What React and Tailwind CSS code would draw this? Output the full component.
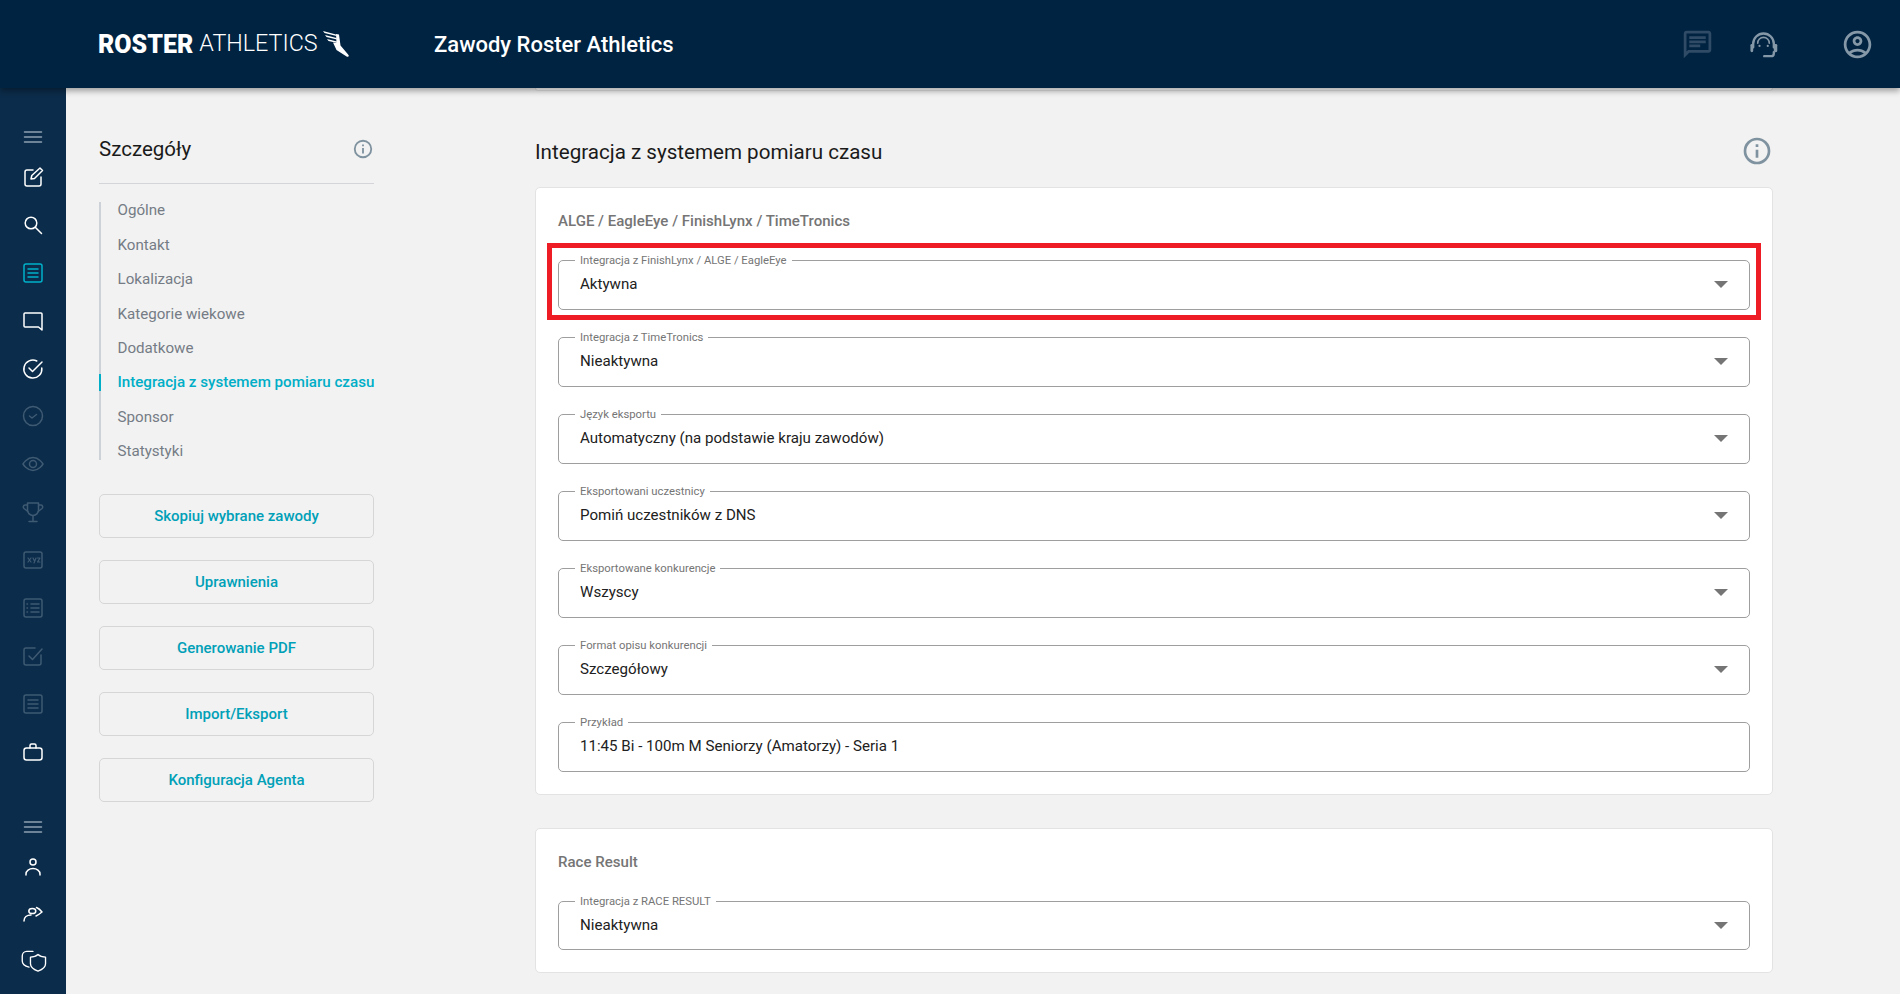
import React from "react";

const font = { fontFamily: "Roboto, sans-serif" };

// Thin line icon wrapper for the left rail
const Line = ({ children, size = 24, sw = 1.5 }) => (
  <svg width={size} height={size} viewBox="0 0 24 24" fill="none" stroke="currentColor" strokeWidth={sw} strokeLinecap="round" strokeLinejoin="round">
    {children}
  </svg>
);

const topRail = [
  { h: "h-[32px]", c: "text-[#8fa1b2]", icon: <path d="M3.500 7h17M3.500 12h17M3.500 17h17" /> },
  { c: "text-white", icon: <><path d="M12 5H6a2 2 0 0 0-2 2v12a2 2 0 0 0 2 2h12a2 2 0 0 0 2-2v-7" /><path d="M10 14l.8-3.500L19 3l2.500 2.500-8 8z" /></> },
  { c: "text-white", icon: <><circle cx="10" cy="10" r="5.800" /><path d="M14.500 14.500l6 6" /></> },
  { c: "text-[#00b0ca]", icon: <><rect x="3" y="3" width="18" height="18" rx="2" /><path d="M7 8h10M7 12h10M7 16h10" /></> },
  { c: "text-white", icon: <path d="M4 4h16a1 1 0 0 1 1 1v16l-3.500-3H4a1 1 0 0 1-1-1V5a1 1 0 0 1 1-1z" /> },
  { c: "text-white", icon: <><path d="M20.800 11a9 9 0 1 1-5-7" /><path d="M8 11l3.500 3.500L21 5" /></> },
  { c: "text-[#3f5a73]", icon: <><circle cx="12" cy="12" r="9.500" /><path d="M8.500 12l2.500 2 4.500-3.500" /></> },
  { c: "text-[#3f5a73]", icon: <><path d="M2 12s3.800-6.500 10-6.500S22 12 22 12s-3.800 6.500-10 6.500S2 12 2 12z" /><circle cx="12" cy="12" r="3.500" /></> },
  { c: "text-[#3f5a73]", icon: <><path d="M6.500 3h11v7a5.500 5.500 0 0 1-11 0z" /><path d="M6.500 5H4a2 2 0 0 0-1 3.500l3.800 3M17.500 5H20a2 2 0 0 1 1 3.500l-3.800 3M12 15.500V21M8 21.500h8" /></> },
  { c: "text-[#3f5a73]", icon: <><rect x="3" y="4" width="18" height="16" rx="2" /><path d="M7 10l3 4M10 10l-3 4M12 10l1.500 3M15 10l-2 5M16.500 10H19l-2.500 4H19" strokeWidth="1.200" /></> },
  { c: "text-[#3f5a73]", icon: <><rect x="3" y="3" width="18" height="18" rx="2" /><path d="M10 8h8M10 12h8M10 16h8M6 8h.5M6 12h.5M6 16h.5" /></> },
  { c: "text-[#3f5a73]", icon: <><path d="M14 4H5a2 2 0 0 0-2 2v13a2 2 0 0 0 2 2h13a2 2 0 0 0 2-2v-8" /><path d="M8 12l3.500 3.500L21 5" /></> },
  { c: "text-[#3f5a73]", icon: <><rect x="3" y="3" width="18" height="18" rx="2" /><path d="M7 8h10M7 12h10M7 16h10" /></> },
  { c: "text-white", icon: <><rect x="3" y="8" width="18" height="12" rx="2.500" /><path d="M9 8V5.500A1.500 1.500 0 0 1 10.500 4h3A1.500 1.500 0 0 1 15 5.500V8" /></> },
];

const bottomRail = [
  { h: "h-[32px]", c: "text-[#8fa1b2]", icon: <path d="M3.500 7h17M3.500 12h17M3.500 17h17" /> },
  { h: "h-[48px]", c: "text-white", icon: <><circle cx="12" cy="7" r="3" /><path d="M5 20v-1a7 5.500 0 0 1 14 0v1" /></> },
  { h: "h-[44px]", c: "text-white", icon: <><ellipse cx="11.300" cy="10" rx="3.500" ry="2.600" /><path d="M15.500 6.500c2 .8 4 2.500 5.500 4.500-1.800 1.500-3.800 3-6 4" /><path d="M3 20c0-3.500 2.800-6 7-6" /></> },
  { h: "h-[54px]", c: "text-white", size: 27, sw: 1.2, icon: <><path d="M11.500 3H6a4 4 0 0 0-4 4v4.500c0 2.500 2 4.500 6 5.500" /><path d="M16 5.800c-1.500 1.500-4 2.300-6.700 2.300v6c0 2.500 2.500 5 6.700 6.500 4.200-1.500 6.700-4 6.700-6.500v-6c-2.700 0-5.200-.8-6.700-2.300z" /></> },
];

const Rail = ({ item }) => (
  <div className={`${item.h || "h-[47.900px]"} flex items-center justify-center ${item.c}`}>
    <Line size={item.size} sw={item.sw}>{item.icon}</Line>
  </div>
);

const InfoIcon = ({ size }) => (
  <svg width={size} height={size} viewBox="0 0 24 24" fill="#7f929f">
    <path d="M12 2a10 10 0 1 0 0 20 10 10 0 0 0 0-20zm0 18a8 8 0 1 1 0-16 8 8 0 0 1 0 16z" />
    <path d="M11 11h2v6h-2zM11 7h2v2h-2z" />
  </svg>
);

const Logo = () => (
  <div className="flex items-center">
    <span className="text-[25px] font-black leading-none text-white">ROSTER</span>
    <span className="ml-[6px] text-[23.300px] font-light leading-none text-white">ATHLETICS</span>
    <svg className="ml-[4px]" width="27" height="28" viewBox="0 0 27 28" fill="#fff">
      <path d="M1 1l13 3.500.5 1.500-12-3zM3 5l11.500 3 .5 1.500L4.500 7zM5 9l10 2.500.5 1.500-9-2z" />
      <path d="M14 4l3 .5 1.500 11 8 9.500c.7 1-.3 2.200-1.500 1.700L14.500 20 11 12.500l3.500.5z" />
    </svg>
  </div>
);

const menu = ["Ogólne", "Kontakt", "Lokalizacja", "Kategorie wiekowe", "Dodatkowe", "Integracja z systemem pomiaru czasu", "Sponsor", "Statystyki"];
const buttons = ["Skopiuj wybrane zawody", "Uprawnienia", "Generowanie PDF", "Import/Eksport", "Konfiguracja Agenta"];

const Field = ({ label, value, select = true }) => (
  <div className="relative flex h-[49.500px] items-center rounded-[5px] border border-[#9e9e9e] bg-white pl-[21px] pr-[21px]">
    <span className="absolute left-[16px] top-[-7px] bg-white px-[5px] text-[11.300px] leading-[13px] text-[#757575]">{label}</span>
    <span className="flex-1 text-[15.100px] text-[#212121]">{value}</span>
    {select && (
      <svg width="14" height="7" viewBox="0 0 14 7" fill="#757575">
        <path d="M0 0h14L7 7z" />
      </svg>
    )}
  </div>
);

const fields = [
  ["Integracja z FinishLynx / ALGE / EagleEye", "Aktywna"],
  ["Integracja z TimeTronics", "Nieaktywna"],
  ["Język eksportu", "Automatyczny (na podstawie kraju zawodów)"],
  ["Eksportowani uczestnicy", "Pomiń uczestników z DNS"],
  ["Eksportowane konkurencje", "Wszyscy"],
  ["Format opisu konkurencji", "Szczegółowy"],
];

export default function App() {
  return (
    <div className="flex h-[994px] flex-col overflow-hidden bg-[#f2f2f2]" style={font}>
      {/* HEADER */}
      <header className="relative z-10 flex h-[88px] shrink-0 items-center bg-[#002341] pl-[98px] shadow-[0_3px_6px_rgba(0,0,0,0.35)]">
        <div className="w-[336px]"><Logo /></div>
        <h1 className="text-[22px] font-medium text-white">Zawody Roster Athletics</h1>
        <div className="ml-auto flex items-center pr-[26px]">
          <svg width="33" height="33" viewBox="0 0 24 24" fill="#2f4b66">
            <path d="M20 4v12H5.170L4 17.170V4h16m0-2H4c-1.100 0-2 .9-2 2v18l4-4h14c1.100 0 2-.9 2-2V4c0-1.100-.9-2-2-2z" />
            <path d="M6 12h8v2H6zM6 9h12v2H6zM6 6h12v2H6z" />
          </svg>
          <svg className="ml-[33px]" width="33" height="33" viewBox="0 0 24 24" fill="none" stroke="#8598a8" strokeWidth="1.700" strokeLinecap="round">
            <path d="M4.500 14v-2.500a7.500 7.500 0 0 1 15 0V14" />
            <path d="M7.800 11a4.200 4.200 0 0 1 8.400 0" strokeWidth="1.200" />
            <rect x="2.500" y="11.600" width="2" height="6" rx="1" fill="#8598a8" stroke="none" />
            <rect x="19.500" y="11.600" width="2.500" height="6" rx="1" fill="#8598a8" stroke="none" />
            <path d="M19.500 17.500v1a2 2 0 0 1-2 2h-5" />
            <circle cx="9.100" cy="13" r=".8" fill="#8598a8" stroke="none" />
            <circle cx="15.100" cy="13" r=".8" fill="#8598a8" stroke="none" />
          </svg>
          <svg className="ml-[61px]" width="33" height="33" viewBox="0 0 24 24" fill="#8598a8">
            <path d="M12 2C6.480 2 2 6.480 2 12s4.480 10 10 10 10-4.480 10-10S17.520 2 12 2zM7.350 18.500C8.660 17.560 10.260 17 12 17s3.340.56 4.650 1.500c-1.310.94-2.910 1.500-4.650 1.500s-3.340-.56-4.650-1.500zm10.790-1.380C16.450 15.800 14.320 15 12 15s-4.450.8-6.140 2.120C4.700 15.730 4 13.950 4 12c0-4.420 3.580-8 8-8s8 3.580 8 8c0 1.950-.7 3.730-1.860 5.120z" />
            <path d="M12 6c-1.930 0-3.500 1.570-3.500 3.500S10.070 13 12 13s3.500-1.570 3.500-3.500S13.930 6 12 6zm0 5c-.83 0-1.500-.67-1.500-1.500S11.170 8 12 8s1.500.67 1.500 1.500S12.830 11 12 11z" />
          </svg>
        </div>
      </header>

      <div className="flex min-h-0 flex-1">
        {/* LEFT RAIL */}
        <aside className="w-[66px] shrink-0 bg-[#0b2c4a] pt-[33px]">
          <div className="flex flex-col">
            {topRail.map((item, i) => <Rail key={i} item={item} />)}
          </div>
          <div className="mt-[35px] flex flex-col">
            {bottomRail.map((item, i) => <Rail key={i} item={item} />)}
          </div>
        </aside>

        {/* DETAILS COLUMN */}
        <div className="ml-[33px] w-[275px] shrink-0 pt-[46px]">
          <div className="flex h-[50px] items-start justify-between border-b border-[#d3d5d9]">
            <h2 className="text-[20.500px] leading-[30px] text-[#1a1a1a]">Szczegóły</h2>
            <div className="mt-[4px]"><InfoIcon size={22} /></div>
          </div>
          <nav className="mt-[18px] flex flex-col gap-[17px] border-l-2 border-[#cdd1d8]">
            {menu.map((m, i) => (
              <a key={m} className={`-ml-[2px] flex h-[17.400px] items-center whitespace-nowrap text-[15.150px] ${i === 5 ? "border-l-2 border-[#00aec7] pl-[16.500px] font-medium text-[#00aec7]" : "pl-[18.500px] text-[#757c85]"}`}>
                {m}
              </a>
            ))}
          </nav>
          <div className="mt-[34px] flex flex-col gap-[22px]">
            {buttons.map((b) => (
              <button key={b} className="h-[44px] rounded-[5px] border border-[#d6d6d6] text-[15px] font-medium text-[#00a0b8]">{b}</button>
            ))}
          </div>
        </div>

        {/* MAIN COLUMN */}
        <main className="relative ml-[161px] w-[1238px] shrink-0">
          <div className="h-[3px] rounded-b-[5px] border-x border-b border-[#e3e3e3] bg-white" />
          <div className="flex h-[96px] items-start justify-between">
            <h2 className="mt-[46px] text-[20.600px] leading-[30px] text-[#1a1a1a]">Integracja z systemem pomiaru czasu</h2>
            <div className="mt-[44px]"><InfoIcon size={32} /></div>
          </div>

          <section className="rounded-[5px] border border-[#e3e3e3] bg-white px-[22px] pb-[22px] pt-[24px]">
            <h3 className="mb-[30px] text-[15.050px] font-medium leading-[18px] text-[#757575]">ALGE / EagleEye / FinishLynx / TimeTronics</h3>
            <div className="flex flex-col gap-[27.500px]">
              {fields.map(([l, v]) => <Field key={l} label={l} value={v} />)}
              <Field label="Przykład" value="11:45 Bi - 100m M Seniorzy (Amatorzy) - Seria 1" select={false} />
            </div>
          </section>

          <section className="mt-[33px] rounded-[5px] border border-[#e3e3e3] bg-white px-[22px] pb-[22px] pt-[24px]">
            <h3 className="mb-[30px] text-[15.050px] font-medium leading-[18px] text-[#757575]">Race Result</h3>
            <Field label="Integracja z RACE RESULT" value="Nieaktywna" />
          </section>

          {/* red annotation frame */}
          <div className="absolute left-[12px] top-[155px] h-[77px] w-[1214px] border-[5px] border-[#ee1c25]" />
        </main>
      </div>
    </div>
  );
}
